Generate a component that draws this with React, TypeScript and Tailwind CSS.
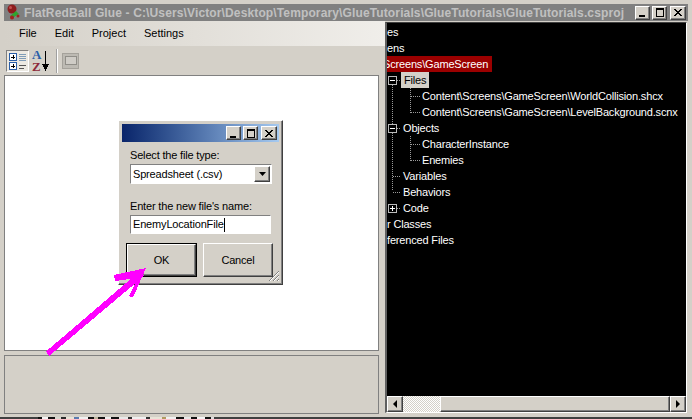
const raised = "border border-t-white border-l-white border-r-[#404040] border-b-[#404040] shadow-[inset_-1px_-1px_0_#808080]";
const sunken = "border border-t-[#808080] border-l-[#808080] border-r-white border-b-white";
const uiText = "text-[11px] tracking-[-0.17px]";

// scraps of the desktop showing under the window
const desktopScraps: [number, string][] = [
  [38, "#404040"], [4, "#101010"], [6, "#f4f4f4"], [7, "#101010"], [6, "#d8d8d0"], [5, "#2a2a2a"], [8, "#e8e4d8"],
  [5, "#5a7ab0"], [9, "#f0f0f0"], [6, "#101010"], [4, "#c0b8a0"], [7, "#101010"], [6, "#f0f0f0"], [8, "#101010"],
  [9, "#e8e8e8"], [4, "#303030"], [14, "#f0f0f0"], [4, "#303030"], [12, "#e8e4d8"], [4, "#b09a60"], [10, "#f0f0f0"],
  [8, "#101010"], [7, "#e8e8e8"], [6, "#101010"], [8, "#f4f4f4"], [6, "#101010"], [3, "#e0e0e0"],
];

function CaptionButton({ kind }: { kind: "min" | "max" | "close" }) {
  return (
    <div className={`h-[14px] bg-[#d4d0c8] flex items-center justify-center ${kind === "close" ? "w-[16px]" : "w-[15px]"} ${raised}`}>
      <svg width="10" height="9" viewBox="0 0 10 9" shapeRendering="crispEdges">
        {kind === "min" && <rect x="1" y="7" width="6" height="2" fill="#000" />}
        {kind === "max" && <path d="M1 0.5h8M1 1.5h8M1.500 1v8M8.500 1v8M1 8.500h8" stroke="#000" fill="none" />}
        {kind === "close" && <path d="M1 1l7 7M2 1l7 7M8 1L1 8M9 1L2 8" stroke="#000" fill="none" />}
      </svg>
    </div>
  );
}

function Caption() {
  return (
    <div className="flex gap-[2px]">
      <CaptionButton kind="min" />
      <CaptionButton kind="max" />
      <div className="ml-[1px]"><CaptionButton kind="close" /></div>
    </div>
  );
}

function Logo() {
  return (
    <svg width="16" height="17" viewBox="0 0 16 17" className="shrink-0">
      <circle cx="8" cy="5" r="4.500" fill="#8e1c1c" />
      <circle cx="6.500" cy="3.500" r="1.500" fill="#c25050" />
      <path d="M6 12l6-5 3 3-5 3-1 2z" fill="#2fa52f" />
      <circle cx="8" cy="13.500" r="2" fill="#a42020" />
      <circle cx="14" cy="12" r="1.500" fill="#a42020" />
    </svg>
  );
}

function ToolbarIcons() {
  return (
    <div className="flex items-center h-[29px] pl-[2px] pr-[6px]">
      <div className={`w-[23px] h-[22px] bg-[#ece9e2] flex items-center justify-center ${sunken}`}>
        <svg width="18" height="18" viewBox="0 0 18 18" shapeRendering="crispEdges">
          <rect x="0.500" y="1.500" width="7" height="7" fill="#fff" stroke="#2a5ea8" />
          <path d="M2 5h4M4 3v4" stroke="#000" />
          <rect x="0.500" y="10.500" width="7" height="7" fill="#fff" stroke="#2a5ea8" />
          <path d="M2 14h4M4 12v4" stroke="#000" />
          <path d="M10 2.500h7M10 4.500h7M10 6.500h7M10 8.500h7" stroke="#7f9db9" />
          <path d="M10 13.500h7M10 16.500h5" stroke="#555" />
        </svg>
      </div>
      <div className="w-[23px] h-[24px] relative">
        <span className="absolute left-[3px] top-0 text-[13px] leading-[11px] font-bold text-[#2a5ea8] font-['Liberation_Serif',serif]">A</span>
        <span className="absolute left-[3px] top-[12px] text-[13px] leading-[11px] font-bold text-[#8e2a3a] font-['Liberation_Serif',serif]">Z</span>
        <svg width="8" height="21" viewBox="0 0 8 21" className="absolute left-[12px] top-[2px]" shapeRendering="crispEdges">
          <path d="M4 0v17" stroke="#000" />
          <path d="M1 13h7l-3.500 7z" fill="#000" />
        </svg>
      </div>
      <div className="ml-[4px] w-[2px] h-[24px] border-l border-l-[#a0a0a0] border-r border-r-white" />
      <div className="ml-[4px] w-[17px] h-[16px] bg-[#bdbab3] border border-[#a5a29b] flex items-center justify-center">
        <div className="w-[12px] h-[9px] border border-[#908e88] bg-[#cfccc6]" />
      </div>
    </div>
  );
}

function Row({ indent, children, className = "" }: { indent: number; children: React.ReactNode; className?: string }) {
  return (
    <div className={`h-4 flex items-center whitespace-nowrap text-white ${uiText}`} style={{ paddingLeft: indent }}>
      <span className={className}>{children}</span>
    </div>
  );
}

function Expander({ open, y }: { open: boolean; y: number }) {
  return (
    <svg width="9" height="9" viewBox="0 0 9 9" className="absolute left-[1px]" style={{ top: y }} shapeRendering="crispEdges">
      <rect x="0.500" y="0.500" width="8" height="8" fill="#000" stroke="#bbb" />
      <path d="M2 4.500h5" stroke="#fff" />
      {!open && <path d="M4.500 2v5" stroke="#fff" />}
    </svg>
  );
}

function TreeLines() {
  return (
    <svg width="60" height="200" className="absolute left-0 top-0" shapeRendering="crispEdges">
      <g stroke="#9a9a9a" strokeDasharray="1 1" fill="none">
        <path d="M5.500 62V168" />
        <path d="M23.500 65V89.500M23.500 73.500H34M23.500 89.500H34" />
        <path d="M23.500 113V137.500M23.500 121.500H34M23.500 137.500H34" />
        <path d="M10 57.500H14M10 105.500H14M6 153.500H14M6 169.500H14M10 185.500H14" />
      </g>
    </svg>
  );
}

function Tree() {
  return (
    <div className="relative h-[373px] w-[299px] bg-black overflow-hidden pt-[1px]">
      <TreeLines />
      <Expander open y={53} />
      <Expander open y={101} />
      <Expander open={false} y={181} />
      <div className="relative">
        <Row indent={0}>es</Row>
        <Row indent={0}>ens</Row>
        <div className={`h-4 flex items-center whitespace-nowrap text-white ${uiText}`}>
          <span className="bg-[#9b0000] pr-[4px] h-4 leading-4 -ml-[4px]">Screens\GameScreen</span>
        </div>
        <Row indent={14} className="bg-[#d4d0c8] text-black px-[3px] leading-4">Files</Row>
        <Row indent={35}>Content\Screens\GameScreen\WorldCollision.shcx</Row>
        <Row indent={35}>Content\Screens\GameScreen\LevelBackground.scnx</Row>
        <Row indent={16}>Objects</Row>
        <Row indent={35}>CharacterInstance</Row>
        <Row indent={35}>Enemies</Row>
        <Row indent={16}>Variables</Row>
        <Row indent={16}>Behaviors</Row>
        <Row indent={16}>Code</Row>
        <Row indent={0}>r Classes</Row>
        <Row indent={0}>ferenced Files</Row>
      </div>
    </div>
  );
}

function ScrollArrow({ dir }: { dir: "left" | "right" }) {
  return (
    <div className={`w-4 h-4 shrink-0 bg-[#d4d0c8] flex items-center justify-center ${raised}`}>
      <svg width="5" height="8" viewBox="0 0 5 8">
        <path d={dir === "left" ? "M4 0v8L0 4z" : "M0 0v8l4-4z"} fill="#000" />
      </svg>
    </div>
  );
}

function Dialog() {
  return (
    <div className={`absolute left-[118px] top-[120px] w-[165px] h-[165px] bg-[#d4d0c8] p-[3px] ${raised}`}>
      <div className="h-[18px] bg-gradient-to-r from-[#0a246a] to-[#a6caf0] flex items-center justify-end pr-[2px]">
        <Caption />
      </div>
      <div className={`pl-[8px] pt-[6px] text-black ${uiText}`}>
        <div className="leading-[15px]">Select the file type:</div>
        <div className={`mt-[1px] h-[20px] w-[142px] bg-white flex items-center justify-between pl-[2px] pr-[1px] ${sunken}`}>
          <span>Spreadsheet (.csv)</span>
          <div className={`w-[16px] h-[16px] bg-[#d4d0c8] flex items-center justify-center ${raised}`}>
            <svg width="7" height="4" viewBox="0 0 7 4"><path d="M0 0h7L3.500 4z" fill="#000" /></svg>
          </div>
        </div>
        <div className="mt-[15px] leading-[15px]">Enter the new file's name:</div>
        <div className={`mt-[1px] h-[19px] w-[141px] bg-white flex items-center pl-[2px] ${sunken}`}>
          <span>EnemyLocationFile</span>
          <span className="w-px h-[14px] bg-black" />
        </div>
      </div>
      <div className={`mt-[9px] pl-[4px] flex gap-[6px] text-black ${uiText}`}>
        <div className="w-[71px] h-[34px] border border-black bg-[#d4d0c8] flex items-center justify-center">
          <div className={`w-[69px] h-[32px] flex items-center justify-center ${raised}`}>OK</div>
        </div>
        <div className={`w-[70px] h-[34px] flex items-center justify-center bg-[#d4d0c8] ${raised}`}>Cancel</div>
      </div>
      <svg width="12" height="12" viewBox="0 0 12 12" className="absolute right-[2px] bottom-[2px]">
        <path d="M1 11L11 1M5 11l6-6M9 11l2-2" stroke="#808080" fill="none" />
        <path d="M2 11L11 2M6 11l5-5M10 11l1-1" stroke="#fff" fill="none" />
      </svg>
    </div>
  );
}

function Arrow() {
  return (
    <svg width="692" height="419" className="absolute left-0 top-0 pointer-events-none" shapeRendering="crispEdges">
      <g fill="#ff00ff">
        <path d="M46 351.500 L140 271 L144 276 L49 356 Z" />
        <path d="M114 275 L146 268 L133 297.500 L129 296 L138 278 L115 281 Z" />
      </g>
    </svg>
  );
}

export default function App() {
  return (
    <div className="relative w-[692px] h-[419px] overflow-hidden bg-[#d4d0c8] font-['Liberation_Sans',sans-serif]">
      <div className="h-[4px]" />
      <div className="h-[17px] mx-[4px] bg-[#808080] flex items-center justify-between pr-[2px]">
        <div className="flex items-center gap-[4px] text-[12px] tracking-[0.13px] font-bold text-[#c0c0c0] whitespace-nowrap">
          <Logo />
          <span>FlatRedBall Glue - C:\Users\Victor\Desktop\Temporary\GlueTutorials\GlueTutorials\GlueTutorials.csproj</span>
        </div>
        <Caption />
      </div>
      <div className="flex h-[393px] pl-[4px]">
        <div className="w-[381px] shrink-0 flex flex-col">
          <div className="h-[25px] bg-gradient-to-r from-[#d4d0c8] via-[#e2dfd9] to-[#f0eeea] flex items-center gap-[18px] pl-[15px] text-black text-[11px]">
            <span>File</span>
            <span>Edit</span>
            <span>Project</span>
            <span>Settings</span>
          </div>
          <ToolbarIcons />
          <div className="h-[276px] w-[375px] bg-white border border-[#808080]" />
          <div className="mt-[4px] h-[59px] w-[375px] border border-[#808080] bg-[#d4d0c8]" />
        </div>
        <div className="w-[302px] shrink-0 mt-[1px] h-[391px] flex flex-col border-t border-t-[#404040] border-l-2 border-l-[#606060] border-r border-r-white border-b border-b-white">
          <Tree />
          <div className="flex h-4 bg-[#d4d0c8]">
            <ScrollArrow dir="left" />
            <div className="w-[37px] bg-[repeating-conic-gradient(#d4d0c8_0_25%,#fff_0_50%)] bg-[length:2px_2px]" />
            <div className={`flex-1 ${raised}`} />
            <ScrollArrow dir="right" />
          </div>
        </div>
      </div>
      <div className="mt-[3px] h-[2px] flex bg-[#404040]">
        {desktopScraps.map(([width, color], i) => (
          <div key={i} style={{ width, backgroundColor: color }} />
        ))}
      </div>
      <Dialog />
      <Arrow />
    </div>
  );
}
